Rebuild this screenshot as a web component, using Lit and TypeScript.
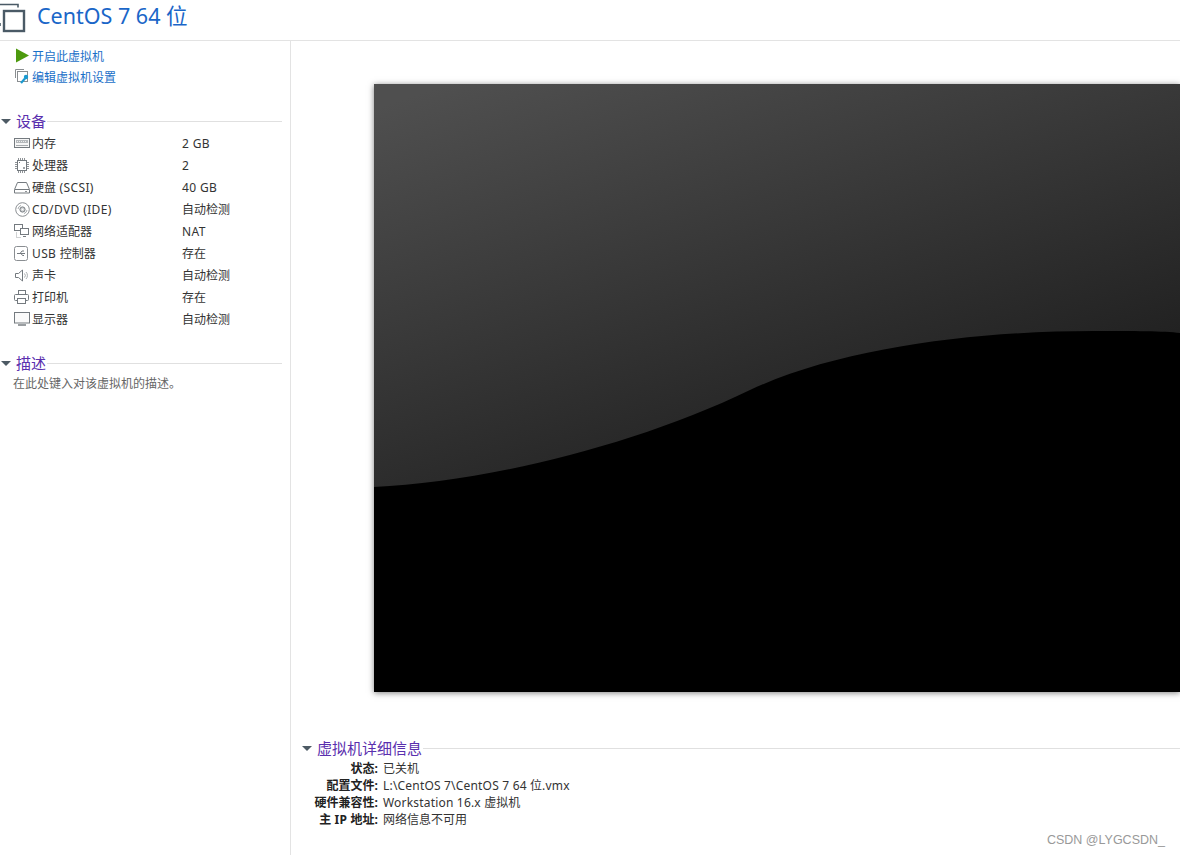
import { LitElement, html, css, svg } from "lit";
import { customElement } from "lit/decorators.js";

const g = "#747a7f";
const icons: Record<string, unknown> = {
  mem: svg`<rect x="0.5" y="2.5" width="15" height="9" fill="#f6f6f6" stroke="${g}"/><rect x="2" y="4" width="12" height="3" fill="#b4b8bb"/><path d="M3 5.5h10" stroke="#eee" stroke-dasharray="1 1"/><path d="M2 9.5h12" stroke="#a5a9ac"/>`,
  cpu: svg`<rect x="3.5" y="2.5" width="9" height="10" fill="#fff" stroke="${g}"/><path d="M4.5 0v2M6.5 0v2M8.5 0v2M10.5 0v2M4.5 13v2M6.5 13v2M8.5 13v2M10.5 13v2M1 4.5h2M1 6.5h2M1 8.5h2M1 10.5h2M13 4.5h2M13 6.5h2M13 8.5h2M13 10.5h2" stroke="#8f9397"/><rect x="5" y="4" width="1" height="1" fill="${g}"/><rect x="9" y="9" width="2" height="2" fill="#a0a4a7"/>`,
  disk: svg`<path d="M3.5 2.5h9l3 7v3.5h-15v-3.5z" fill="#fff" stroke="${g}"/><path d="M1 9.5h14" stroke="${g}"/><path d="M11 11.5h2" stroke="#8f9397"/>`,
  cd: svg`<circle cx="8.5" cy="7.5" r="6.8" fill="#fff" stroke="#8a8e92"/><circle cx="8.5" cy="7.5" r="2.6" fill="#d2d4d6" stroke="${g}"/><circle cx="8.5" cy="7.5" r="0.8" fill="#fff"/><path d="M4 7a4.5 4.5 0 0 1 3-3.6M13 8a4.5 4.5 0 0 1-3 3.6" stroke="#a8acaf" fill="none"/>`,
  net: svg`<rect x="0.5" y="0.5" width="8" height="6" fill="#fff" stroke="${g}"/><rect x="6.5" y="4.5" width="8" height="6" fill="#fff" stroke="${g}"/><path d="M9 12.5h3" stroke="${g}"/><path d="M2.5 8.5v5h4" stroke="#a0a4a7" stroke-dasharray="1 1" fill="none"/>`,
  usb: svg`<rect x="0.5" y="0.5" width="13" height="14" rx="2" fill="#fff" stroke="#8a8e92"/><path d="M3 7.5h8M6 7.5l2-2.5h2M7 7.5l1.5 2h1.5" stroke="${g}" fill="none"/>`,
  snd: svg`<path d="M1.5 5.5h3l4-3.5v11l-4-3.5h-3z" fill="#fff" stroke="${g}"/><path d="M10.5 5.5a3 3 0 0 1 0 4M12 4a5 5 0 0 1 0 7" stroke="#a8acaf" fill="none"/>`,
  prn: svg`<rect x="4.5" y="0.5" width="7" height="4" fill="#fff" stroke="${g}"/><rect x="0.5" y="4.5" width="14" height="6" rx="1" fill="#fff" stroke="${g}"/><rect x="3.5" y="8.5" width="8" height="5" fill="#fff" stroke="${g}"/>`,
  mon: svg`<rect x="0.5" y="0.5" width="15" height="10.5" fill="#fafafa" stroke="${g}"/><path d="M4 13h8" stroke="#9a9ea1" stroke-width="2"/>`,
};

const devices = [
  ["mem", "内存", "2 GB"],
  ["cpu", "处理器", "2"],
  ["disk", "硬盘 (SCSI)", "40 GB"],
  ["cd", "CD/DVD (IDE)", "自动检测"],
  ["net", "网络适配器", "NAT"],
  ["usb", "USB 控制器", "存在"],
  ["snd", "声卡", "自动检测"],
  ["prn", "打印机", "存在"],
  ["mon", "显示器", "自动检测"],
];

const details = [
  ["状态:", "已关机"],
  ["配置文件:", "L:\\CentOS 7\\CentOS 7 64 位.vmx"],
  ["硬件兼容性:", "Workstation 16.x 虚拟机"],
  ["主 IP 地址:", "网络信息不可用"],
];

// Latin runs are slightly wider in the reference's UI font, so they get their own tracking.
const mixed = (text: string) =>
  text.split(/([\x00-\x7f]+)/).map((part) =>
    /^[\x00-\x7f]+$/.test(part) ? html`<span class="l">${part}</span>` : part
  );

@customElement("app-root")
export class AppRoot extends LitElement {
  static styles = css`
    :host {
      display: block;
      width: 1180px;
      height: 855px;
      overflow: hidden;
      background: #fff;
      font-family: "Noto Sans", "Noto Sans CJK SC", sans-serif;
      font-size: 12px;
      color: #333;
      position: relative;
    }
    .l { letter-spacing: 0.38px; }
    .rows .l { letter-spacing: 0.19px; }
    .head {
      height: 41px;
      box-sizing: border-box;
      border-bottom: 1px solid #e3e3e3;
      display: flex;
      align-items: flex-start;
      overflow: hidden;
    }
    .logo { width: 26px; height: 33px; margin-right: 11px; flex: none; }
    .title { font-size: 21.5px; color: #1a66c8; line-height: 32px; }
    .body { display: flex; height: 814px; }
    .side {
      width: 291px;
      box-sizing: border-box;
      border-right: 1px solid #e3e3e3;
      padding-top: 4px;
      flex: none;
    }
    .act {
      display: flex;
      align-items: center;
      height: 21px;
      padding-left: 15px;
      color: #1a70c8;
      gap: 2px;
    }
    .act svg { width: 15px; height: 15px; flex: none; }
    .sec {
      display: flex;
      align-items: center;
      height: 20px;
      font-size: 15px;
      color: #5a2fae;
      margin-right: 8px;
    }
    .sec b { font-weight: 400; margin-top: -2px; }
    .first { margin-top: 24px; }
    .tri {
      width: 0; height: 0;
      border-left: 5px solid transparent;
      border-right: 5px solid transparent;
      border-top: 5px solid #4d5a64;
      margin: 1px 5px 0 1px;
      flex: none;
    }
    .sec .line { flex: 1; height: 1px; background: #e0e0e0; margin-left: 1px; }
    .devs { padding-top: 1px; margin-bottom: 23px; }
    .dev { display: flex; align-items: center; height: 22px; padding-left: 14px; }
    .dev svg { width: 16px; height: 15px; flex: none; margin-right: 2px; }
    .dev .n { width: 150px; flex: none; }
    .hint { color: #666; padding: 1px 0 0 13px; line-height: 20px; }
    .main { flex: 1; min-width: 0; display: flex; flex-direction: column; }
    .shot {
      margin: 43px 0 0 83px;
      height: 608px;
      width: 806px;
      box-shadow: 0 1px 6px rgba(0, 0, 0, 0.5);
      flex: none;
    }
    .shot svg { display: block; width: 100%; height: 100%; }
    .details { margin-top: 46px; padding-left: 11px; }
    .details .sec { margin-right: 0; margin-left: -1px; }
    .rows { margin-top: 1px; }
    .row { display: flex; height: 17px; align-items: center; }
    .k { width: 76px; text-align: right; font-weight: 700; color: #222; margin-right: 5px; flex: none; white-space: nowrap; }
    .wm { position: absolute; right: 15px; bottom: 8px; font: 12.5px "Liberation Sans", sans-serif; color: #999; }
  `;

  render() {
    return html`
      <div class="head">
        <svg class="logo" viewBox="0 0 26 33">
          <path d="M0 4.5H18V7.5M0 23V26" fill="none" stroke="#4a5a66" stroke-width="1.6"/>
          <rect x="4" y="11" width="20" height="20" fill="#fff" stroke="#4a5a66" stroke-width="2.4"/>
        </svg>
        <div class="title">CentOS 7 64 位</div>
      </div>
      <div class="body">
        <div class="side">
          <div class="act">
            <svg viewBox="0 0 15 15"><path d="M1 0.5L14 7.5L1 14.5Z" fill="#4d9a0e"/></svg>
            <span>开启此虚拟机</span>
          </div>
          <div class="act">
            <svg viewBox="0 0 15 15">
              <path d="M0.5 9V0.5H9" fill="none" stroke="#8a8e91"/>
              <rect x="2.5" y="2.5" width="10" height="10" fill="#fff" stroke="#8a8e91"/>
              <path d="M6 14L10 9.5" stroke="#1a9ad0" stroke-width="2.2"/>
              <circle cx="11" cy="8" r="2.2" fill="#1a9ad0"/>
            </svg>
            <span>编辑虚拟机设置</span>
          </div>
          <div class="sec first"><i class="tri"></i><b>设备</b><span class="line"></span></div>
          <div class="devs">
            ${devices.map(
              ([i, n, v]) => html`<div class="dev"><svg viewBox="0 0 16 15">${icons[i]}</svg><span class="n">${mixed(n)}</span><span>${mixed(v)}</span></div>`
            )}
          </div>
          <div class="sec"><i class="tri"></i><b>描述</b><span class="line"></span></div>
          <div class="hint">在此处键入对该虚拟机的描述。</div>
        </div>
        <div class="main">
          <div class="shot">
            <svg viewBox="0 0 806 608" preserveAspectRatio="none">
              <defs>
                <linearGradient id="gr" gradientUnits="userSpaceOnUse" x1="26" y1="16" x2="182" y2="486">
                  <stop offset="0" stop-color="#4f4f4f"/>
                  <stop offset="1" stop-color="#1f1f1f"/>
                </linearGradient>
              </defs>
              <rect width="806" height="608" fill="url(#gr)"/>
              <path d="M0 403C110 398 260 362 376 306C470 262 610 247 720 247C760 247 790 247 806 249V608H0Z" fill="#000"/>
            </svg>
          </div>
          <div class="details">
            <div class="sec"><i class="tri"></i><b>虚拟机详细信息</b><span class="line"></span></div>
            <div class="rows">
              ${details.map(
                ([k, v]) => html`<div class="row"><span class="k">${mixed(k)}</span><span>${mixed(v)}</span></div>`
              )}
            </div>
          </div>
        </div>
      </div>
      <div class="wm">CSDN @LYGCSDN_</div>
    `;
  }
}
